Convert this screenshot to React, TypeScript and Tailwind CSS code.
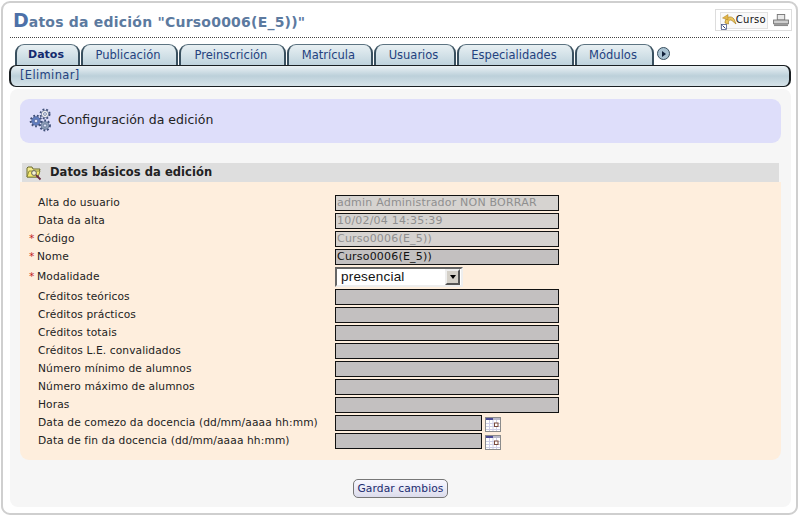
const FONT = "font-['DejaVu_Sans',Verdana,sans-serif]";

const tabs = [
  { label: "Datos", width: "w-[65px]", active: true },
  { label: "Publicación", width: "w-[97px]" },
  { label: "Preinscrición", width: "w-[107px]" },
  { label: "Matrícula", width: "w-[86px]" },
  { label: "Usuarios", width: "w-[82px]" },
  { label: "Especialidades", width: "w-[117px]" },
  { label: "Módulos", width: "w-[79px]" },
];

const rows = [
  { label: "Alta do usuario", value: "admin Administrador NON BORRAR", tone: "light" },
  { label: "Data da alta", value: "10/02/04 14:35:39", tone: "light" },
  { label: "Código", value: "Curso0006(E_5))", tone: "light", required: true },
  { label: "Nome", value: "Curso0006(E_5))", required: true },
  { label: "Modalidade", select: true, required: true },
  { label: "Créditos teóricos" },
  { label: "Créditos prácticos" },
  { label: "Créditos totais" },
  { label: "Créditos L.E. convalidados" },
  { label: "Número mínimo de alumnos" },
  { label: "Número máximo de alumnos" },
  { label: "Horas" },
  { label: "Data de comezo da docencia (dd/mm/aaaa hh:mm)", date: true },
  { label: "Data de fin da docencia (dd/mm/aaaa hh:mm)", date: true },
];

function Gear({ cx, cy, r, fill }: { cx: number; cy: number; r: number; fill: string }) {
  return (
    <g>
      <circle cx={cx} cy={cy} r={r} fill="none" stroke="#3f4f78" strokeWidth="2.6" strokeDasharray="1.7 1.7" />
      <circle cx={cx} cy={cy} r={r - 0.6} fill={fill} stroke="#56658c" strokeWidth="0.6" />
      <circle cx={cx} cy={cy} r={r * 0.35} fill="#dfe3f6" stroke="#4a5a85" strokeWidth="0.6" />
    </g>
  );
}

function GearsIcon() {
  return (
    <svg width="24" height="26" viewBox="0 0 24 26" className="shrink-0">
      <Gear cx={16} cy={7} r={4.2} fill="#f1f1f1" />
      <Gear cx={7} cy={14} r={5} fill="#5f7cc0" />
      <Gear cx={16} cy={18.5} r={4.6} fill="#8fa0b8" />
    </svg>
  );
}

function FolderIcon() {
  return (
    <svg width="17" height="17" viewBox="0 0 17 17" className="shrink-0">
      <path d="M1 4 L1 13 L12 13 L14 5 L7 5 L6 3 L2 3 Z" fill="#f3ea8e" stroke="#6a6a2c" strokeWidth="1" />
      <path d="M3 7 L14 7 L12 13 L1 13 Z" fill="#f6e96e" stroke="#77772f" strokeWidth="0.8" />
      <circle cx="8" cy="9" r="2.4" fill="#f7f3d0" stroke="#555" strokeWidth="0.9" />
      <path d="M10 11 L14.5 15.5" stroke="#6a2f42" strokeWidth="1.8" />
    </svg>
  );
}

function CalendarIcon() {
  return (
    <svg width="16" height="15" viewBox="0 0 16 15" className="ml-[3px] mt-[2px] shrink-0">
      <rect x="0.5" y="0.5" width="15" height="14" fill="#fff" stroke="#8b8b8b" />
      <rect x="1" y="1" width="7" height="2" fill="#4c4c96" />
      <rect x="8" y="1" width="7" height="2" fill="#b9b9c9" />
      <path d="M1 6.5H15M1 9.5H15M1 12.5H15M4.5 3V14M8 3V14M11.5 3V14" stroke="#cfcfe6" strokeWidth="1" />
      <rect x="9.5" y="6" width="3.5" height="3.5" fill="#fff" stroke="#7a4a3a" />
    </svg>
  );
}

function PrinterIcon() {
  return (
    <svg width="16" height="13" viewBox="0 0 17 14">
      <rect x="4.5" y="0.5" width="8" height="6" fill="#e9e9e9" stroke="#777" />
      <rect x="0.5" y="6.5" width="16" height="4" fill="#cfcfcf" stroke="#777" />
      <rect x="1" y="11" width="15" height="2" fill="#8a8a8a" />
    </svg>
  );
}

function CursoLink() {
  return (
    <span className="relative flex h-[17px] w-[48px] items-center justify-end border border-[#e2e2e2] bg-[#f9f9f9] pr-[1px]">
      <svg width="17" height="17" viewBox="0 0 17 17" className="absolute left-0 top-0">
        <path d="M4 10 C4 4 10 2 13 6 L15 11 L11.5 8 C9 6 7 7 7.5 11 Z" fill="#eec65c" stroke="#a67f22" strokeWidth="0.7" />
        <path d="M1.5 5 L7 1.5 L7 7 Z" fill="#e4b648" stroke="#a67f22" strokeWidth="0.5" />
        <rect x="0.5" y="11.5" width="5" height="5" fill="#fff" stroke="#33447a" strokeWidth="0.7" />
        <path d="M1.5 12.5 L4.5 15.5" stroke="#33447a" strokeWidth="1" />
      </svg>
      <span className="text-[10px] leading-none tracking-[0.3px] text-[#111]">Curso</span>
    </span>
  );
}

function FieldBox({ value, tone, short }: { value?: string; tone?: string; short?: boolean }) {
  return (
    <div
      className={`h-[16px] overflow-hidden whitespace-nowrap border border-[#111] px-px text-[11px] leading-[14px] tracking-[0.2px] ${
        short ? "w-[147px]" : "w-[224px]"
      } ${tone === "light" ? "bg-[#d6d3d0] text-[#8f8f8f]" : "bg-[#c3c0c0] text-[#111]"}`}
    >
      {value}
    </div>
  );
}

function SelectBox() {
  return (
    <div className="flex h-[20px] w-[128px] items-center border-2 border-t-[#666] border-l-[#666] border-r-[#eee] border-b-[#eee] bg-white pl-[4px] pr-px font-['Liberation_Sans',Arial,sans-serif] text-[13.5px] leading-none tracking-[0.2px] text-[#111]">
      <span className="flex-1">presencial</span>
      <span className="flex h-[16px] w-[15px] items-center justify-center border-2 border-t-[#eee] border-l-[#eee] border-r-[#555] border-b-[#555] bg-[#d4d0c8]">
        <span className="border-x-[3.5px] border-t-[4px] border-x-transparent border-t-black" />
      </span>
    </div>
  );
}

function FormRow({ row }: { row: (typeof rows)[number] }) {
  return (
    <div className={`flex items-start ${row.select ? "h-[22px]" : "h-[18px]"}`}>
      <div className={`flex w-[306px] text-[10.67px] tracking-[0.1px] text-[#222] ${row.select ? "pt-[2px] leading-[16px]" : "leading-[16px]"}`}>
        <span className="w-[8px] text-[#c02020]">{row.required ? "*" : ""}</span>
        <span className={row.required ? "pl-0" : "pl-px"}>{row.label}</span>
      </div>
      {row.select ? (
        <SelectBox />
      ) : (
        <FieldBox value={row.value} tone={row.tone} short={row.date} />
      )}
      {row.date && <CalendarIcon />}
    </div>
  );
}

export default function App() {
  return (
    <div className={`${FONT} h-[516px] w-[799px] overflow-hidden bg-white p-[1px]`}>
      <div className="flex h-[514px] flex-col rounded-[9px] border-2 border-[#cfcfcf] px-[7px] pb-[6px]">
        <header className="flex h-[35px] items-end justify-between border-b border-dotted border-b-[#444] pb-[1px]">
          <h1 className="pb-[6px] pl-[3px] leading-none text-[#5c7a9f]">
            <span className="text-[19px] font-bold text-[#4d70a8]">D</span>
            <span className="text-[14px] font-semibold tracking-[0.22px]">atos da edición "Curso0006(E_5))"</span>
          </h1>
          <div className="-mr-[3px] mb-[5px] flex h-[22px] w-[77px] items-center gap-[5px] border border-[#ddd] pl-[4px]">
            <CursoLink />
            <PrinterIcon />
          </div>
        </header>

        <nav className="mt-[6px] flex h-[21px] items-start pl-[5px]">
          {tabs.map((tab) => (
            <div
              key={tab.label}
              className={`mr-px flex h-[21px] items-center justify-center rounded-t-[9px] border-x-2 border-t border-x-[#39505f] border-t-[#5d7482] bg-gradient-to-b from-[#e8f0f3] to-[#bfd3dd] pr-[3px] pt-[1px] ${tab.width} ${
                tab.active ? "text-[11px] font-bold text-[#13296e]" : "text-[11.5px] text-[#24427f]"
              }`}
            >
              {tab.label}
            </div>
          ))}
          <span className="ml-[2px] mt-[3px] flex h-[13px] w-[13px] items-center justify-center rounded-full border border-[#39505f] bg-[#a9c2d2]">
            <span className="ml-px border-y-[3px] border-l-[4px] border-y-transparent border-l-[#10203a]" />
          </span>
        </nav>

        <div className="-ml-px -mr-[2px] flex h-[22px] items-center rounded-[7px] border border-x-2 border-[#1a1f22] bg-gradient-to-b from-[#eaf1f4] via-[#bcd0da] to-[#d6e3e9] pl-[9px] text-[11.5px] tracking-[0.35px] text-[#24427f]">
          [Eliminar]
        </div>

        <main className="-mr-[2px] mt-[2px] flex flex-1 flex-col rounded-[8px] bg-[#f6f6f6] px-[10px] pt-[10px]">
          <div className="flex h-[44px] items-center gap-[5px] rounded-[9px] bg-[#dedefa] pb-[2px] pl-[9px] text-[12.5px] text-[#222]">
            <GearsIcon />
            Configuración da edición
          </div>

          <div className="mx-[2px] mt-[20px] flex h-[19px] items-center gap-[7px] bg-[#dedede] pl-[4px] text-[11.5px] font-bold tracking-[0.06px] text-[#222]">
            <FolderIcon />
            Datos básicos da edición
          </div>

          <div className="h-[278px] rounded-[9px] rounded-t-none bg-[#feeedd] pl-[9px] pt-[13px]">
            {rows.map((row) => (
              <FormRow key={row.label} row={row} />
            ))}
          </div>

          <div className="flex justify-center pt-[19px]">
            <button
              type="button"
              className="h-[19px] w-[95px] rounded-[5px] border border-[#777] bg-gradient-to-b from-[#f8f8ff] to-[#dcdcec] text-[10.67px] tracking-[0.1px] text-[#1a2a70]"
            >
              Gardar cambios
            </button>
          </div>
        </main>
      </div>
    </div>
  );
}
